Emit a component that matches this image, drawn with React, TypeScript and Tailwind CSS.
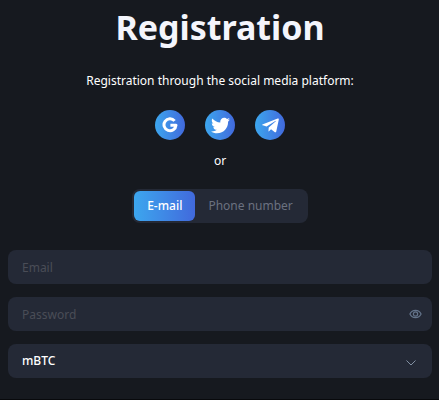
import { useState } from "react";
import { FaTelegramPlane, FaTwitter } from "react-icons/fa";

const gradient = "bg-linear-to-r from-[#3ca6ee] to-[#4169dc]";
const field =
  "block w-full h-[34px] rounded-lg bg-[#242936] px-[14px] text-xs outline-none";

function GoogleIcon() {
  return (
    <svg viewBox="0 0 16 16" className="size-4" fill="none" aria-hidden="true">
      <path
        d="M12.6 3.9A6 6 0 1 0 14 8.2H8.4"
        stroke="currentColor"
        strokeWidth="3"
        strokeLinejoin="round"
      />
    </svg>
  );
}

function EyeIcon() {
  return (
    <svg viewBox="0 0 14 10" className="w-[13px] h-[10px]" fill="none" stroke="currentColor" strokeWidth="1.3" aria-hidden="true">
      <path d="M1 5C3.5-.2 10.5-.2 13 5C10.5 10.2 3.5 10.2 1 5Z" />
      <circle cx="7" cy="5" r="2.3" />
    </svg>
  );
}

export default function App() {
  const [tab, setTab] = useState("email");
  const [showPassword, setShowPassword] = useState(false);

  const socials = [
    { name: "Google", icon: <GoogleIcon /> },
    { name: "Twitter", icon: <FaTwitter className="size-[19px]" /> },
    { name: "Telegram", icon: <FaTelegramPlane className="size-[19px]" /> },
  ];

  return (
    <main className="min-h-screen border-b border-[#08090c] bg-[#16191f] pl-2 pr-[7px] pt-1 font-['Noto_Sans',sans-serif] text-xs text-white">
      <h1 className="text-center text-[34px] leading-[46px] font-bold text-[#f4f5fc]">
        Registration
      </h1>
      <p className="mt-[22px] text-center leading-[18px]">
        Registration through the social media platform:
      </p>

      <div className="mt-5 flex justify-center gap-5">
        {socials.map((s) => (
          <button
            key={s.name}
            type="button"
            aria-label={s.name}
            className={`flex size-[30px] items-center justify-center rounded-full ${gradient}`}
          >
            {s.icon}
          </button>
        ))}
      </div>
      <p className="mt-3 text-center leading-[18px]">or</p>

      <div className="mx-auto mt-[19px] flex h-[34px] w-fit rounded-lg bg-[#242936] p-[2px]">
        <button
          type="button"
          onClick={() => setTab("email")}
          className={`rounded-md px-[13px] font-medium ${tab === "email" ? gradient : "text-[#6b7180]"}`}
        >
          E-mail
        </button>
        <button
          type="button"
          onClick={() => setTab("phone")}
          className={`rounded-md px-[13px] ${tab === "phone" ? gradient : "text-[#6b7180]"}`}
        >
          Phone number
        </button>
      </div>

      <form className="mt-[27px] flex flex-col gap-[13px]">
        <input
          type={tab === "email" ? "email" : "tel"}
          aria-label={tab === "email" ? "Email" : "Phone number"}
          placeholder={tab === "email" ? "Email" : "Phone number"}
          className={`${field} placeholder:text-[#4a4d57]`}
        />
        <div className="relative">
          <input
            type={showPassword ? "text" : "password"}
            aria-label="Password"
            placeholder="Password"
            className={`${field} placeholder:text-[#4a4d57]`}
          />
          <button
            type="button"
            aria-label="Show password"
            onClick={() => setShowPassword(!showPassword)}
            className="absolute inset-y-0 right-[10px] flex items-center text-[#64748b]"
          >
            <EyeIcon />
          </button>
        </div>
        <div className="relative">
          <select aria-label="Currency" className={`${field} appearance-none font-medium`}>
            <option>mBTC</option>
            <option>BTC</option>
            <option>ETH</option>
          </select>
          <svg
            viewBox="0 0 10 6"
            className="pointer-events-none absolute right-4 top-4 h-[6px] w-[10px] text-[#8290a3]"
            fill="none"
            stroke="currentColor"
            aria-hidden="true"
          >
            <path d="M.5.5 5 5 9.5.5" />
          </svg>
        </div>
      </form>
    </main>
  );
}
